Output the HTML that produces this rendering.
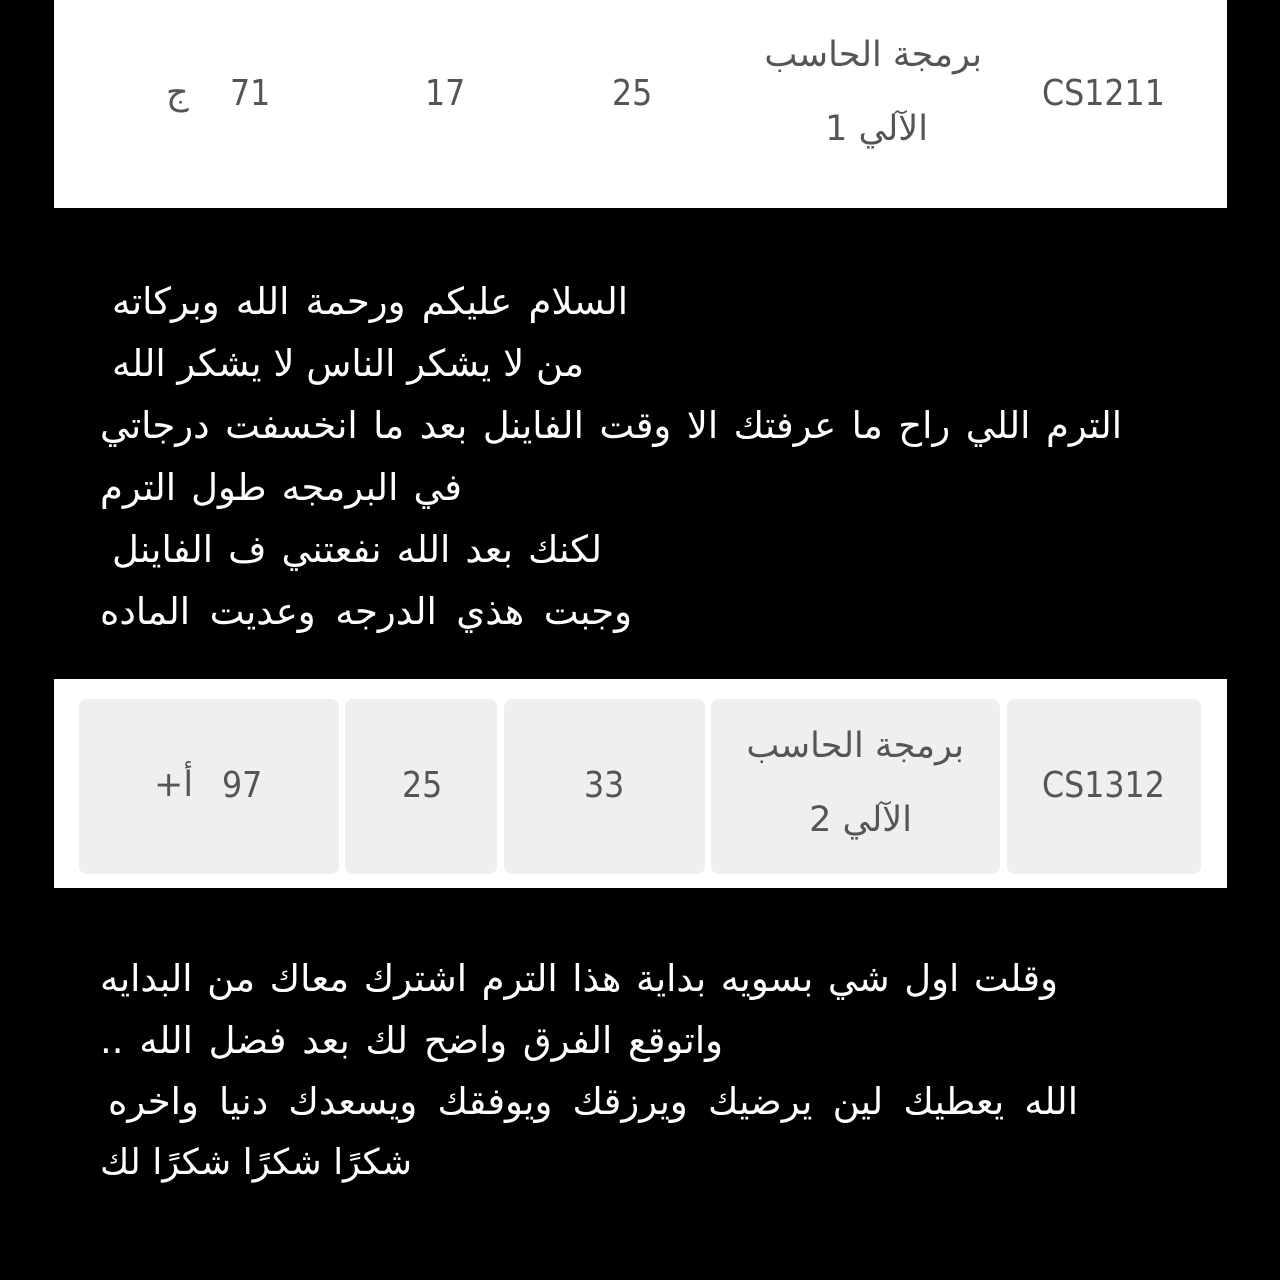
<!DOCTYPE html>
<html><head><meta charset="utf-8"><style>
body{margin:0;width:1280px;height:1280px;background:#000;position:relative;overflow:hidden;font-family:"Liberation Sans","Noto Sans CJK SC",sans-serif}
.p{position:absolute;left:54px;width:1173px;background:#fff}
.t{position:absolute;color:#555;font-size:36px;line-height:1;white-space:nowrap;font-family:"DejaVu Sans","Liberation Sans",sans-serif}
.n{transform:scaleX(0.88);transform-origin:left center}
.c{position:absolute;background:#efefef;border-radius:8px;top:20px;height:175px}
.a{position:absolute;color:#fff;font-size:37px;direction:rtl;white-space:nowrap;line-height:1;font-family:"DejaVu Sans",sans-serif;text-align:justify;text-align-last:justify}
.ar{font-size:35px;direction:rtl}
</style></head><body>
<div class="p" style="top:0;height:208px">
<div class="t n" style="left:988px;top:76px">CS1211</div>
<div class="t ar" style="left:646px;top:38px;width:282px;text-align:right">برمجة الحاسب</div>
<div class="t ar" style="left:646px;top:112px;width:228px;text-align:right">الآلي 1</div>
<div class="t n" style="left:558px;top:76px">25</div>
<div class="t n" style="left:371px;top:76px">17</div>
<div class="t n" style="left:176px;top:76px">71</div>
<div class="t ar" style="left:112px;top:76px">ج</div>
</div>
<div class="a" style="left:112px;width:516px;top:283px">السلام عليكم ورحمة الله وبركاته</div>
<div class="a" style="left:112px;width:472px;top:345px">من لا يشكر الناس لا يشكر الله</div>
<div class="a" style="left:100px;width:1022px;top:407px">الترم اللي راح ما عرفتك الا وقت الفاينل بعد ما انخسفت درجاتي</div>
<div class="a" style="left:100px;width:362px;top:469px">في البرمجه طول الترم</div>
<div class="a" style="left:112px;width:490px;top:531px">لكنك بعد الله نفعتني ف الفاينل</div>
<div class="a" style="left:100px;width:532px;top:593px">وجبت هذي الدرجه وعديت الماده</div>
<div class="p" style="top:679px;height:209px">
<div class="c" style="left:25px;width:260px"></div>
<div class="c" style="left:291px;width:152px"></div>
<div class="c" style="left:450px;width:201px"></div>
<div class="c" style="left:657px;width:289px"></div>
<div class="c" style="left:953px;width:194px"></div>
<div class="t n" style="left:988px;top:89px">CS1312</div>
<div class="t ar" style="left:650px;top:50px;width:260px;text-align:right">برمجة الحاسب</div>
<div class="t ar" style="left:650px;top:124px;width:208px;text-align:right">الآلي 2</div>
<div class="t n" style="left:530px;top:89px">33</div>
<div class="t n" style="left:348px;top:89px">25</div>
<div class="t n" style="left:168px;top:89px">97</div>
<div class="t ar" style="left:100px;top:89px">أ+</div>
</div>
<div class="a" style="left:100px;width:958px;top:960px">وقلت اول شي بسويه بداية هذا الترم اشترك معاك من البدايه</div>
<div class="a" style="left:100px;width:623px;top:1022px">واتوقع الفرق واضح لك بعد فضل الله ..</div>
<div class="a" style="left:108px;width:970px;top:1083px">الله يعطيك لين يرضيك ويرزقك ويوفقك ويسعدك دنيا واخره</div>
<div class="a" style="left:100px;width:312px;top:1145px;font-size:35.5px">شكرًا شكرًا شكرًا لك</div>
</body></html>
